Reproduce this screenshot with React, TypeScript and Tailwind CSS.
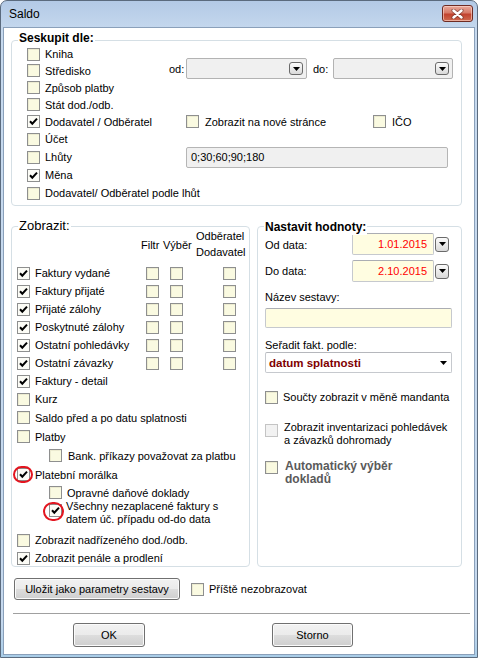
import React from "react";

type CbProps = { checked?: boolean; disabled?: boolean };

function Cb({ checked = false, disabled = false }: CbProps) {
  let cls = "border-[#8e8f8f] bg-[#fafae1] shadow-[inset_1px_1px_0_#ecebd0]";
  if (checked) cls = "border-[#8e8f8f] bg-[#fcfcf6]";
  if (disabled) cls = "border-[#c4c4c4] bg-[#f2f2f2]";
  return (
    <span className={"relative flex shrink-0 items-center justify-center w-[13px] h-[13px] border " + cls}>
      {checked && (
        <svg width="11" height="11" viewBox="0 0 11 11" className="block">
          <path d="M2 5.2 L4.3 7.7 L9 2.6" fill="none" stroke="#000" strokeWidth="2" />
        </svg>
      )}
    </span>
  );
}

function DropBtn({ h = 15 }: { h?: number }) {
  return (
    <span
      className={
        "flex shrink-0 items-center justify-center w-[14px] rounded-[3px] border border-[#6a6a6a] bg-[linear-gradient(#fbfbfb,#d9d9d9)] " +
        (h === 13 ? "h-[13px]" : "h-[15px]")
      }
    >
      <svg width="7" height="4" viewBox="0 0 7 4" className="block">
        <path d="M0 0H7L3.5 4Z" fill="#000" />
      </svg>
    </span>
  );
}

function Group({
  title,
  titleClass,
  titleTop,
  className,
  children,
}: {
  title: string;
  titleClass: string;
  titleTop: string;
  className: string;
  children: React.ReactNode;
}) {
  return (
    <div className={"relative border border-[#d5dfe5] rounded-[4px] " + className}>
      <span className={"absolute left-[6px] bg-white px-px leading-[16px] whitespace-nowrap " + titleTop + " " + titleClass}>
        {title}
      </span>
      {children}
    </div>
  );
}

function Label({ children, className = "" }: { children: React.ReactNode; className?: string }) {
  return <span className={"whitespace-nowrap " + className}>{children}</span>;
}

function WinButton({ children, className }: { children: React.ReactNode; className: string }) {
  return (
    <div
      className={
        "flex items-center justify-center rounded-[3px] border border-[#707070] bg-[linear-gradient(#f2f2f2_0%,#ebebeb_50%,#dddddd_51%,#cfcfcf_100%)] shadow-[inset_0_0_0_1px_#fbfbfb] whitespace-nowrap " +
        className
      }
    >
      {children}
    </div>
  );
}

const g1Rows: { label: string; checked: boolean; h: string; right?: string }[] = [
  { label: "Kniha", checked: false, h: "h-[16px]" },
  { label: "Středisko", checked: false, h: "h-[17px]", right: "odDo" },
  { label: "Způsob platby", checked: false, h: "h-[17px]" },
  { label: "Stát dod./odb.", checked: false, h: "h-[17px]" },
  { label: "Dodavatel / Odběratel", checked: true, h: "h-[17px]", right: "nova" },
  { label: "Účet", checked: false, h: "h-[18px]" },
  { label: "Lhůty", checked: false, h: "h-[18px]", right: "lhuty" },
  { label: "Měna", checked: true, h: "h-[18px]" },
  { label: "Dodavatel/ Odběratel podle lhůt", checked: false, h: "h-[18px]" },
];

const g2Cols = [
  "Faktury vydané",
  "Faktury přijaté",
  "Přijaté zálohy",
  "Poskytnuté zálohy",
  "Ostatní pohledávky",
  "Ostatní závazky",
];

function Combo({ w }: { w: string }) {
  return (
    <div className={"flex items-center justify-end h-[21px] rounded-[2px] border border-[#b3b3b3] bg-[#f0f0f0] pr-[3px] " + w}>
      <DropBtn h={13} />
    </div>
  );
}

function RightOf(kind?: string) {
  if (kind === "odDo") {
    return (
      <div className="flex items-center -mt-[4px]">
        <Label className="w-[17px]">od:</Label>
        <Combo w="w-[121px]" />
        <Label className="ml-[6px] w-[20px]">do:</Label>
        <Combo w="w-[120px]" />
      </div>
    );
  }
  if (kind === "nova") {
    return (
      <div className="flex items-center pl-[17px]">
        <div className="flex items-center gap-[6px] w-[187px]">
          <Cb />
          <Label>Zobrazit na nové stránce</Label>
        </div>
        <div className="flex items-center gap-[6px]">
          <Cb />
          <Label>IČO</Label>
        </div>
      </div>
    );
  }
  if (kind === "lhuty") {
    return (
      <div className="ml-[17px] flex items-center w-[262px] h-[21px] rounded-[2px] border border-[#b5b5b5] bg-[#f0f0f0] pl-[4px]">
        0;30;60;90;180
      </div>
    );
  }
  return null;
}

export default function App() {
  return (
    <div className="w-[478px] h-[658px] flex flex-col overflow-hidden rounded-t-[7px] border border-[#5b6b7e] bg-[linear-gradient(#b3cae6,#c6d9ee_30px,#c6d9ee_620px,#a9cde8)] font-['Liberation_Sans',Arial,sans-serif] text-[11px] leading-[14px] text-black">
      {/* title bar */}
      <div className="h-[26px] shrink-0 flex items-start justify-between pl-[8px] pr-[4px] pt-[4px]">
        <span className="mt-[2px] text-[12px] leading-[14px] text-black">Saldo</span>
        <div className="w-[31px] h-[17px] flex items-center justify-center rounded-[3px] border border-[#6e2b23] bg-[linear-gradient(#e9a99a,#d77a68_45%,#c2432f_55%,#cf6a4f)] shadow-[inset_0_0_0_1px_rgba(255,220,210,0.6)]">
          <svg width="13" height="10" viewBox="0 0 13 10" className="block">
            <path d="M2.5 1.5 L10.5 8.5 M10.5 1.5 L2.5 8.5" stroke="#5a2a22" strokeWidth="4.2" strokeLinecap="round" opacity="0.55" />
            <path d="M2.5 1.5 L10.5 8.5 M10.5 1.5 L2.5 8.5" stroke="#ffffff" strokeWidth="2.4" strokeLinecap="round" />
          </svg>
        </div>
      </div>

      {/* client area */}
      <div className="mx-[2px] mb-[2px] flex-1 flex flex-col border border-[#8aa0ba] bg-white">
        <div className="pl-[7px] pt-[12px]">
          {/* Seskupit dle */}
          <Group
            title="Seskupit dle:"
            titleClass="font-bold text-[12px]"
            titleTop="-top-[11px]"
            className="w-[451px] h-[166px] pt-[5px] pl-[15px]"
          >
            {g1Rows.map((r) => (
              <div key={r.label} className={"flex items-center " + r.h}>
                <div className="w-[142px] flex items-center gap-[5px]">
                  <Cb checked={r.checked} />
                  <Label>{r.label}</Label>
                </div>
                {RightOf(r.right)}
              </div>
            ))}
          </Group>

          <div className="mt-[20px] flex gap-[7px]">
            {/* Zobrazit */}
            <Group
              title="Zobrazit:"
              titleClass="text-[13px]"
              titleTop="-top-[9px]"
              className="w-[239px] h-[341px]"
            >
              {/* header */}
              <div className="h-[37px] flex items-start pl-[129px]">
                <Label className="w-[22px] mt-[10px] leading-[16px]">Filtr</Label>
                <Label className="w-[33px] mt-[10px] leading-[16px]">Výběr</Label>
                <div className="pt-[1px] leading-[16px] flex flex-col">
                  <Label>Odběratel</Label>
                  <Label>Dodavatel</Label>
                </div>
              </div>
              {g2Cols.map((l) => (
                <div key={l} className="h-[18px] flex items-center pl-[5px]">
                  <Cb checked />
                  <Label className="ml-[5px] w-[111px]">{l}</Label>
                  <Cb />
                  <span className="w-[11px]" />
                  <Cb />
                  <span className="w-[40px]" />
                  <Cb />
                </div>
              ))}
              <div className="h-[18px] flex items-center gap-[5px] pl-[5px]">
                <Cb checked />
                <Label>Faktury - detail</Label>
              </div>
              <div className="h-[18px] flex items-center gap-[5px] pl-[5px]">
                <Cb />
                <Label>Kurz</Label>
              </div>
              <div className="h-[19px] flex items-center gap-[5px] pl-[5px]">
                <Cb />
                <Label>Saldo před a po datu splatnosti</Label>
              </div>
              <div className="h-[19px] flex items-center gap-[5px] pl-[5px]">
                <Cb />
                <Label>Platby</Label>
              </div>
              <div className="h-[19px] flex items-center gap-[6px] pl-[37px]">
                <Cb />
                <Label>Bank. příkazy považovat za platbu</Label>
              </div>
              <div className="h-[19px] flex items-center gap-[5px] pl-[5px]">
                <Cb checked />
                <Label>Platební morálka</Label>
              </div>
              <div className="h-[17px] flex items-center gap-[5px] pl-[37px]">
                <Cb />
                <Label>Opravné daňové doklady</Label>
              </div>
              <div className="h-[30px] flex items-start gap-[4px] pl-[37px]">
                <div className="mt-[3px]">
                  <Cb checked />
                </div>
                <div className="leading-[13px] flex flex-col -mt-[1px]">
                  <Label>Všechny nezaplacené faktury s</Label>
                  <Label>datem úč. případu od-do data</Label>
                </div>
              </div>
              <div className="h-[18px] flex items-center gap-[5px] pl-[5px]">
                <Cb />
                <Label>Zobrazit nadřízeného dod./odb.</Label>
              </div>
              <div className="h-[18px] flex items-center gap-[5px] pl-[5px]">
                <Cb checked />
                <Label>Zobrazit penále a prodlení</Label>
              </div>

              {/* red highlight circles */}
              <span className="absolute left-[1px] top-[239px] w-[20px] h-[17px] rounded-full border-2 border-[#e3151f]" />
              <span className="absolute left-[31px] top-[275px] w-[21px] h-[19px] rounded-full border-2 border-[#e3151f]" />
            </Group>

            {/* Nastavit hodnoty */}
            <Group
              title="Nastavit hodnoty:"
              titleClass="font-bold text-[12px]"
              titleTop="-top-[8px]"
              className="w-[205px] h-[341px] pl-[7px]"
            >
              <div className="mt-[6px] h-[22px] flex items-center">
                <Label className="w-[87px] mt-[2px]">Od data:</Label>
                <div className="w-[82px] h-[22px] flex items-center justify-end pr-[6px] rounded-[2px] border border-[#c6c9ce] border-t-[#abadb3] bg-[#fffde1] text-[#ff0000]">
                  1.01.2015
                </div>
                <span className="ml-[1px]">
                  <DropBtn />
                </span>
              </div>
              <div className="mt-[5px] h-[22px] flex items-center">
                <Label className="w-[87px]">Do data:</Label>
                <div className="w-[82px] h-[22px] flex items-center justify-end pr-[6px] rounded-[2px] border border-[#c6c9ce] border-t-[#abadb3] bg-[#fffde1] text-[#ff0000]">
                  2.10.2015
                </div>
                <span className="ml-[1px]">
                  <DropBtn />
                </span>
              </div>
              <div className="mt-[8px]">Název sestavy:</div>
              <div className="mt-[4px] w-[187px] h-[20px] rounded-[2px] border border-[#c6c9ce] border-t-[#abadb3] bg-[#fffde1]" />
              <div className="mt-[10px]">Seřadit fakt. podle:</div>
              <div className="w-[187px] h-[21px] flex items-center justify-between pl-[3px] pr-[4px] rounded-[2px] border border-[#c6c9ce] border-t-[#b5b7bc] bg-white">
                <span className="font-bold text-[11.5px] text-[#800000]">datum splatnosti</span>
                <svg width="7" height="4" viewBox="0 0 7 4" className="block">
                  <path d="M0 0H7L3.5 4Z" fill="#000" />
                </svg>
              </div>
              <div className="mt-[17px] flex items-center gap-[5px]">
                <Cb />
                <Label>Součty zobrazit v měně mandanta</Label>
              </div>
              <div className="mt-[17px] flex items-start gap-[6px]">
                <div className="mt-[3px]">
                  <Cb disabled />
                </div>
                <div className="leading-[13px] flex flex-col">
                  <Label>Zobrazit inventarizaci pohledávek</Label>
                  <Label>a závazků dohromady</Label>
                </div>
              </div>
              <div className="mt-[13px] flex items-start gap-[7px]">
                <div className="mt-[1px]">
                  <Cb />
                </div>
                <div className="leading-[13px] flex flex-col font-bold text-[12px] text-[#5a5a5a]">
                  <Label>Automatický výběr</Label>
                  <Label>dokladů</Label>
                </div>
              </div>
            </Group>
          </div>

          {/* bottom row */}
          <div className="mt-[11px] flex items-center pl-[3px]">
            <WinButton className="w-[166px] h-[22px]">Uložit jako parametry sestavy</WinButton>
            <div className="ml-[11px] flex items-center gap-[5px]">
              <Cb />
              <Label>Příště nezobrazovat</Label>
            </div>
          </div>
        </div>

        <div className="mt-[13px] ml-[9px] mr-[4px] border-t border-[#a0a0a0]" />

        <div className="mt-[9px] flex pl-[69px]">
          <WinButton className="w-[72px] h-[24px]">OK</WinButton>
          <WinButton className="ml-[127px] w-[81px] h-[24px]">Storno</WinButton>
        </div>
      </div>
    </div>
  );
}
